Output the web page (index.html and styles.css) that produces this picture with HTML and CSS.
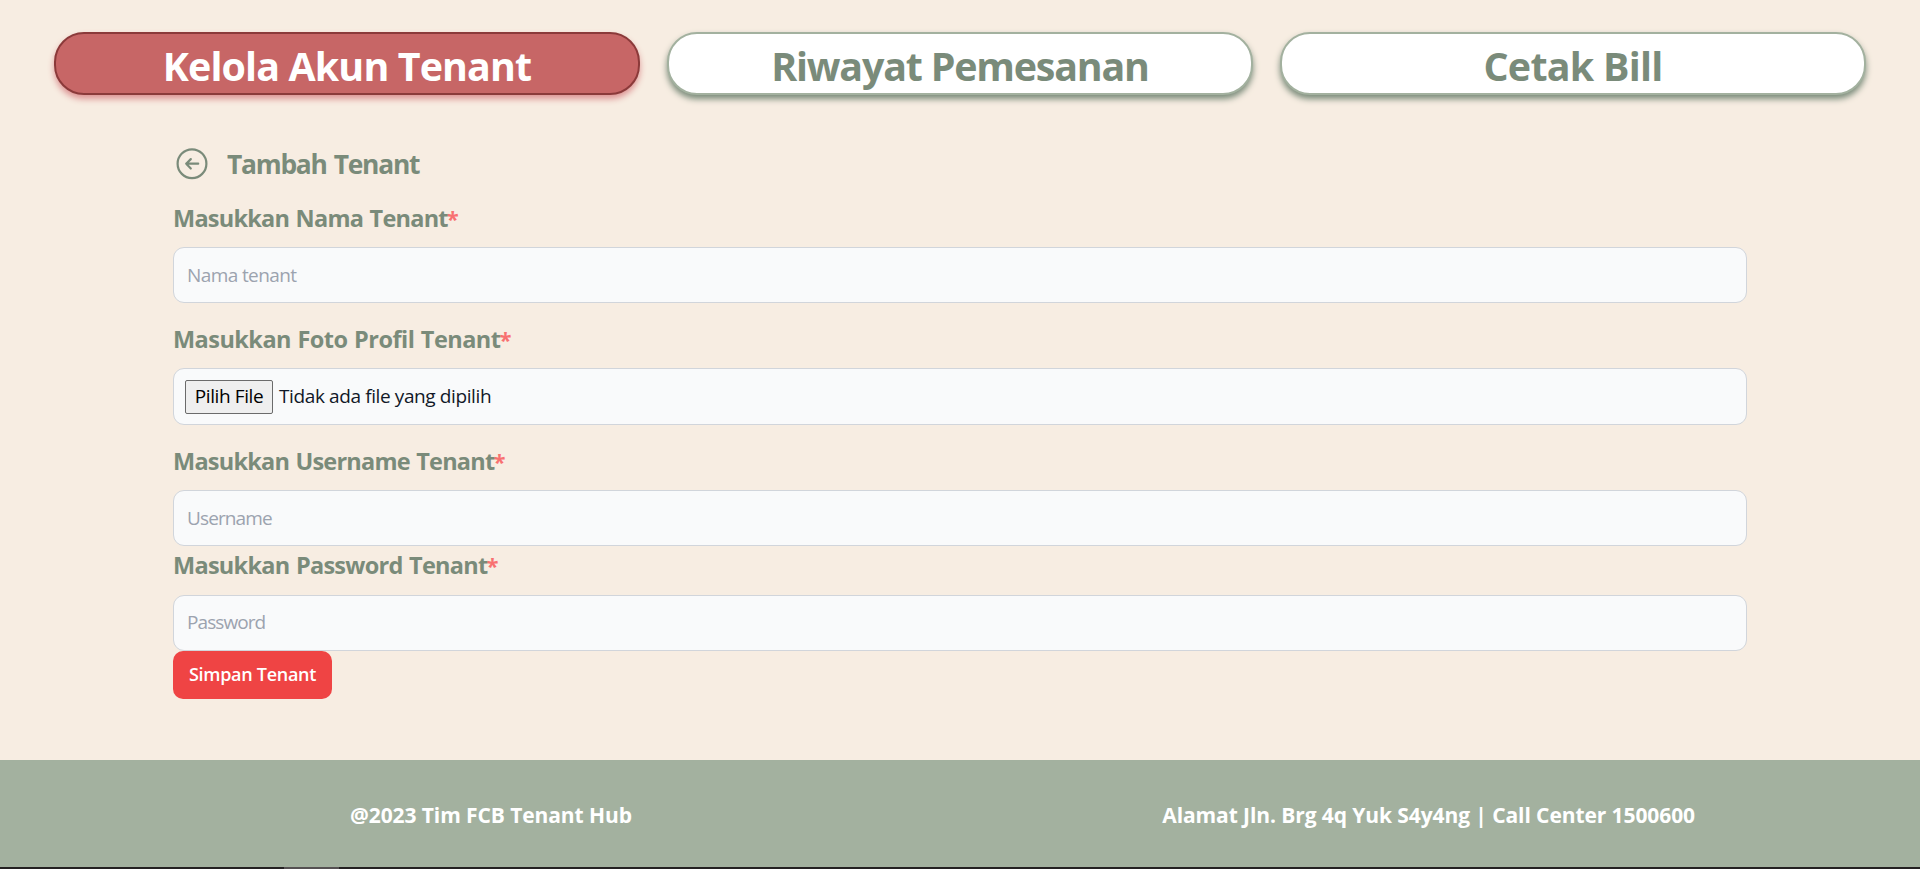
FILE: index.html
```html
<!DOCTYPE html>
<html lang="id">
<head>
<meta charset="utf-8">
<title>Tambah Tenant</title>
<link rel="stylesheet" href="styles.css">
</head>
<body>
<nav class="tabs">
  <a class="tab tab-active"><span class="t-kelola">Kelola Akun Tenant</span></a>
  <a class="tab"><span class="t-riwayat">Riwayat Pemesanan</span></a>
  <a class="tab"><span class="t-cetak">Cetak Bill</span></a>
</nav>
<main class="content">
  <header class="heading">
    <svg class="back" viewBox="0 0 32 32" fill="none" stroke="currentColor" stroke-width="2.2" stroke-linecap="round" stroke-linejoin="round"><circle cx="16" cy="15.7" r="14.4"/><path d="M22.2 15.7H10.2M14.8 11.1L10.2 15.7l4.6 4.8"/></svg>
    <h1 class="title">Tambah Tenant</h1>
  </header>
  <form class="form">
    <label class="label"><span class="l-nama">Masukkan Nama Tenant</span><span class="star">*</span></label>
    <div class="field"><span class="p-nama">Nama tenant</span></div>
    <label class="label label-spaced"><span class="l-foto">Masukkan Foto Profil Tenant</span><span class="star">*</span></label>
    <div class="field field-file"><span class="pick"><span class="p-pick">Pilih File</span></span><span class="p-file">Tidak ada file yang dipilih</span></div>
    <label class="label label-spaced"><span class="l-user">Masukkan Username Tenant</span><span class="star">*</span></label>
    <div class="field"><span class="p-user">Username</span></div>
    <label class="label label-tight"><span class="l-pass">Masukkan Password Tenant</span><span class="star">*</span></label>
    <div class="field"><span class="p-pass">Password</span></div>
    <button class="save" type="button"><span class="t-save">Simpan Tenant</span></button>
  </form>
</main>
<footer class="footer">
  <span class="f-left">@2023 Tim FCB Tenant Hub</span>
  <span class="f-right">Alamat Jln. Brg 4q Yuk S4y4ng | Call Center 1500600</span>
</footer>
<div class="strip"><div class="strip-thumb"></div></div>
</body>
</html>
```
FILE: styles.css
```css
* { box-sizing: border-box; }
body {
  margin: 0;
  height: 869px;
  overflow: hidden;
  display: flex;
  flex-direction: column;
  background: #f7ede2;
  font-family: "Open Sans", "Noto Sans", sans-serif;
  color: #7a8b7a;
}
span { white-space: nowrap; }
.tabs { display: grid; grid-template-columns: repeat(3, 586px); gap: 27px; padding: 32px 0 0 54px; }
.tab {
  height: 63px;
  display: flex;
  align-items: center;
  justify-content: center;
  border: 2px solid #a3b19f;
  border-radius: 30px;
  background: #fff;
  box-shadow: 0 4px 6px #7a8b7a;
  font-size: 39.4px;
  font-weight: 700;
  line-height: 60px;
  padding-top: 5px;
}
.tab-active { background: #c76666; border-color: #8b3a3a; color: #fff; box-shadow: 0 4px 6px #dd9494; }
.t-kelola { letter-spacing: -.87px; }
.t-riwayat { letter-spacing: -1.2px; }
.t-cetak { letter-spacing: -.75px; }
.content { width: 1574px; margin: 53px 0 0 173px; }
.heading { display: flex; align-items: center; height: 32px; padding-left: 3px; }
.back { width: 32px; height: 32px; }
.title { margin: 0 0 0 19px; font-size: 26.4px; line-height: 32px; font-weight: 700; white-space: nowrap; letter-spacing: -1.25px; word-spacing: 1.5px; }
.form { display: flex; flex-direction: column; align-items: stretch; padding-top: 20px; }
.label { display: flex; height: 32px; margin-bottom: 15px; font-size: 23.5px; line-height: 36px; font-weight: 700; word-spacing: 1px; }
.label-spaced { margin-top: 18px; }
.label-tight { margin-top: 2px; line-height: 35px; }
.l-nama { letter-spacing: -.75px; }
.l-foto { letter-spacing: -.54px; }
.l-user { letter-spacing: -.77px; }
.l-pass { letter-spacing: -.72px; }
.star { margin-left: -1px; color: #f87171; font-size: 22px; }
.field {
  height: 56px;
  display: flex;
  align-items: center;
  padding: 0 14px 0 13px;
  border: 1px solid #d1d5db;
  border-radius: 11px;
  background: #f9fafb;
  font-size: 19px;
  color: #9ca3af;
}
.p-nama { letter-spacing: -.6px; }
.p-user { letter-spacing: -.88px; }
.p-pass { letter-spacing: -.93px; padding-bottom: 2px; }
.field-file { height: 57px; padding: 0 11px; color: #111827; gap: 6px; }
.pick { width: 88px; height: 34px; display: flex; align-items: center; justify-content: center; border: 1px solid #6b6b6b; border-radius: 2px; background: #efefef; color: #000; }
.p-pick, .p-file { padding-bottom: 2px; letter-spacing: -.39px; }
.save { align-self: flex-start; width: 159px; height: 48px; padding: 0 0 2px; border: 0; border-radius: 10px; background: #ef4444; color: #fff; font: 600 18px "Open Sans", sans-serif; letter-spacing: -.28px; }
.footer { margin-top: auto; height: 107px; display: flex; justify-content: space-between; padding: 36px 225px 0 350px; background: #a3b19f; color: #fff; font-size: 21px; line-height: 38px; font-weight: 700; letter-spacing: -.09px; }
.strip { height: 2px; padding-left: 284px; background: #242122; }
.strip-thumb { width: 55px; height: 2px; background: #555152; }
```
